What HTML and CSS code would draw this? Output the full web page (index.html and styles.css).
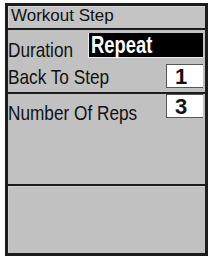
FILE: index.html
```html
<!DOCTYPE html>
<html>
<head>
<meta charset="utf-8">
<link rel="stylesheet" href="styles.css">
</head>
<body>
<div class="device">
  <div class="title">Workout Step</div>
  <div class="list">
    <div class="row row-duration">
      <span class="label">Duration</span>
      <span class="select"><span class="select-text">Repeat</span></span>
    </div>
    <div class="row row-back">
      <span class="label">Back To Step</span>
      <span class="field">1</span>
    </div>
    <div class="row row-reps">
      <span class="label">Number Of Reps</span>
      <span class="field">3</span>
    </div>
  </div>
  <div class="footer"></div>
</div>
</body>
</html>
```
FILE: styles.css
```css
html, body {
  margin: 0;
  padding: 0;
  background: #fff;
}
body {
  padding: 3px 0 0 5px;
  font-family: "Liberation Sans", Arial, sans-serif;
  color: #111;
}
.device {
  box-sizing: border-box;
  width: 203px;
  height: 253px;
  border: 3px solid #1c1c1c;
  background: #c1c1c1;
  display: flex;
  flex-direction: column;
}
.title {
  height: 24px;
  box-sizing: border-box;
  border-bottom: 2px solid #1c1c1c;
  padding-left: 3px;
  font-size: 17px;
  line-height: 19px;
  background: #c4c4c4;
  box-shadow: inset 1px 1px 0 #d6d6d6;
}
.list {
  height: 156px;
  box-sizing: border-box;
  border-bottom: 2px solid #1c1c1c;
  display: flex;
  flex-direction: column;
}
.row {
  display: flex;
  align-items: flex-start;
  justify-content: space-between;
  box-sizing: border-box;
}
.row-duration {
  height: 31px;
}
.row-back {
  height: 33px;
  border-bottom: 2px solid #1c1c1c;
}
.row-reps {
  height: 32px;
}
.label {
  display: inline-block;
  font-size: 21px;
  line-height: 20px;
  white-space: nowrap;
  transform: scaleX(0.82);
  transform-origin: left center;
}
.row-duration .label { margin-top: 10px; }
.row-back .label { margin-top: 6px; }
.row-reps .label { margin-top: 9px; }
.select {
  margin-top: 3px;
  width: 115px;
  height: 25px;
  box-sizing: border-box;
  background: #000;
  color: #fff;
  padding-left: 2px;
  border: 1px solid #eee;
  border-right: 0;
  border-top: 0;
  margin-right: 2px;
  flex-shrink: 0;
}
.select-text {
  display: inline-block;
  font-weight: bold;
  font-size: 23px;
  line-height: 24px;
  transform: scaleX(0.8);
  transform-origin: left center;
}
.field {
  width: 37px;
  height: 24px;
  box-sizing: border-box;
  background: #fff;
  border: 1px solid #555;
  border-right: 0;
  font-weight: bold;
  font-size: 22px;
  line-height: 23px;
  padding-left: 8px;
  margin-right: 2px;
  flex-shrink: 0;
}
.row-back .field { margin-top: 3px; }
.row-reps .field { margin-top: 0; }
.footer {
  flex: 1;
  box-shadow: inset 1px 1px 0 #d0d0d0;
}
```
